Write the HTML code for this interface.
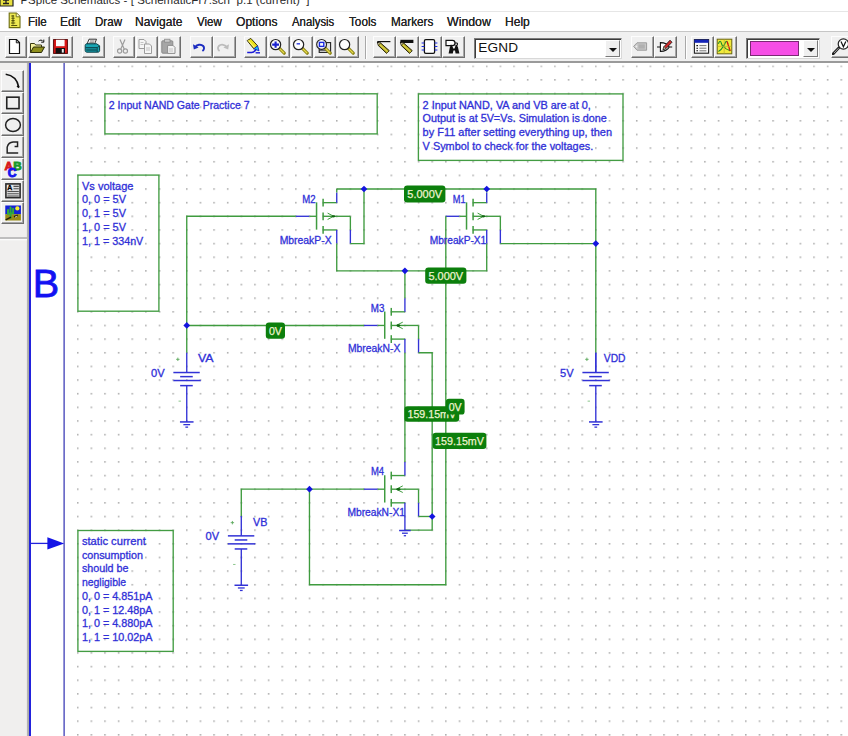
<!DOCTYPE html>
<html><head><meta charset="utf-8"><title>PSpice Schematics</title>
<style>
html,body{margin:0;padding:0;}
body{width:848px;height:736px;overflow:hidden;background:#fff;position:relative;font-family:"Liberation Sans",sans-serif;}
#cv{position:absolute;left:0;top:0;}
#title{position:absolute;left:0;top:0;width:848px;height:11.6px;background:#fff;overflow:hidden;border-bottom:1px solid #e6e6e6;box-sizing:border-box;}
#title .t{position:absolute;left:20.4px;top:-5.8px;font-size:11.5px;color:#2a2a2a;white-space:pre;letter-spacing:0.05px;}
#menu{position:absolute;left:0;top:11.6px;width:848px;height:19.4px;background:#fff;}
#menu span{position:absolute;top:3.1px;font-size:11.9px;color:#262626;white-space:pre;transform-origin:0 50%;text-shadow:0 0 0.4px #262626;}
#tbar{position:absolute;left:0;top:31px;width:848px;height:32px;background:#f0f0f0;border-top:1.2px solid #c6c6c6;box-sizing:border-box;}
#tbar:after{content:"";position:absolute;left:0;right:0;bottom:0;height:1.6px;background:#9a9a9a;}
.tb{position:absolute;top:3.8px;margin-left:-0.5px;width:22.8px;height:22px;box-sizing:border-box;background:#f0f0f0;
 border-top:1px solid #fdfdfd;border-left:1px solid #fdfdfd;border-right:1.4px solid #6e6e6e;border-bottom:1.4px solid #6e6e6e;
 box-shadow:inset -1px -1px 0 #a6a6a6;}
.tb svg{position:absolute;left:0.6px;top:1.4px;width:17px;height:17px;}
.sep{position:absolute;top:4px;width:1px;height:23px;background:#a8a8a8;box-shadow:1px 0 0 #fff;}
.combo{position:absolute;top:5.6px;height:21.5px;box-sizing:border-box;background:#fff;border:1.3px solid #7c7c7c;border-right-color:#d8d8d8;border-bottom-color:#d8d8d8;box-shadow:inset 1px 1px 0 #3c3c3c;}
.cbtn{position:absolute;top:1.8px;right:1px;bottom:1px;width:15px;background:#f0f0f0;border-left:1px solid #fff;border-top:1px solid #fff;border-right:1px solid #7a7a7a;border-bottom:1px solid #7a7a7a;box-sizing:border-box;}
.cbtn:after{content:"";position:absolute;left:3px;top:6.5px;border-left:4px solid transparent;border-right:4px solid transparent;border-top:4.4px solid #111;}
#left{position:absolute;left:0;top:63px;width:28.6px;height:673px;background:linear-gradient(to right,#f0efee 0,#f0efee 26.4px,#b4b4b4 27.4px,#a8a8a8 28.8px);}
#left .hl{position:absolute;left:0;top:173.9px;width:27px;height:1.8px;background:#bebebe;box-shadow:0 1.3px 0 #fbfbfb;}
.lb{position:absolute;left:1.4px;width:22.4px;height:22px;box-sizing:border-box;background:#f0f0f0;
 border-top:1px solid #fdfdfd;border-left:1px solid #fdfdfd;border-right:1.4px solid #6e6e6e;border-bottom:1.4px solid #6e6e6e;
 box-shadow:inset -1px -1px 0 #a6a6a6;}
.lb svg{position:absolute;left:1.2px;top:1px;width:18px;height:18px;}

</style></head><body>
<svg id="cv" width="848" height="736" viewBox="0 0 848 736" font-family="Liberation Sans, sans-serif"><defs><pattern id="g" x="76.92" y="65.4" width="13.635" height="13.645" patternUnits="userSpaceOnUse"><rect x="0" y="0" width="1.55" height="1.6" fill="#adadad"/></pattern></defs><rect x="76.92" y="65.4" width="771.08" height="670.6" fill="url(#g)"/>
<line x1="316.55" y1="202.35" x2="316.55" y2="229.64" stroke="#3f9b3f" stroke-width="1.5"/>
<line x1="323.1" y1="198.75" x2="323.1" y2="206.55" stroke="#3f9b3f" stroke-width="1.5"/>
<line x1="323.1" y1="212.39" x2="323.1" y2="220.19" stroke="#3f9b3f" stroke-width="1.5"/>
<line x1="323.1" y1="226.04" x2="323.1" y2="233.84" stroke="#3f9b3f" stroke-width="1.5"/>
<line x1="323.1" y1="202.65" x2="336.74" y2="202.65" stroke="#3f9b3f" stroke-width="1.35"/>
<line x1="323.1" y1="229.94" x2="336.74" y2="229.94" stroke="#3f9b3f" stroke-width="1.35"/>
<line x1="323.1" y1="216.29" x2="350.37" y2="216.29" stroke="#3f9b3f" stroke-width="1.35"/>
<path d="M327.6,213.09 L333.6,216.29 L327.6,219.48999999999998" fill="none" stroke="#3f9b3f" stroke-width="1.0"/>
<ellipse cx="333.5" cy="216.29" rx="1.9" ry="1.15" fill="#116311"/>
<polyline points="186.75,325.45 186.75,216.29 295.83,216.29" fill="none" stroke="#3f9b3f" stroke-width="1.35" stroke-linejoin="miter"/>
<line x1="295.83" y1="216.29" x2="309.47" y2="216.29" stroke="#3232d6" stroke-width="1.35"/>
<line x1="309.47" y1="216.29" x2="316.55" y2="216.29" stroke="#3f9b3f" stroke-width="1.35"/>
<line x1="336.74" y1="202.65" x2="336.74" y2="192.5" stroke="#3232d6" stroke-width="1.35"/>
<line x1="336.74" y1="192.5" x2="336.74" y2="189.0" stroke="#3f9b3f" stroke-width="1.35"/>
<line x1="350.37" y1="216.29" x2="350.37" y2="229.94" stroke="#3f9b3f" stroke-width="1.35"/>
<line x1="350.37" y1="229.94" x2="350.37" y2="243.58" stroke="#3232d6" stroke-width="1.35"/>
<polyline points="350.37,243.58 364.0,243.58 364.0,189.0" fill="none" stroke="#3f9b3f" stroke-width="1.35" stroke-linejoin="miter"/>
<line x1="336.74" y1="229.94" x2="336.74" y2="243.58" stroke="#3232d6" stroke-width="1.35"/>
<polyline points="336.74,243.58 336.74,270.87 486.72,270.87 486.72,243.58" fill="none" stroke="#3f9b3f" stroke-width="1.35" stroke-linejoin="miter"/>
<line x1="466.53" y1="202.35" x2="466.53" y2="229.64" stroke="#3f9b3f" stroke-width="1.5"/>
<line x1="473.08" y1="198.75" x2="473.08" y2="206.55" stroke="#3f9b3f" stroke-width="1.5"/>
<line x1="473.08" y1="212.39" x2="473.08" y2="220.19" stroke="#3f9b3f" stroke-width="1.5"/>
<line x1="473.08" y1="226.04" x2="473.08" y2="233.84" stroke="#3f9b3f" stroke-width="1.5"/>
<line x1="473.08" y1="202.65" x2="486.72" y2="202.65" stroke="#3f9b3f" stroke-width="1.35"/>
<line x1="473.08" y1="229.94" x2="486.72" y2="229.94" stroke="#3f9b3f" stroke-width="1.35"/>
<line x1="473.08" y1="216.29" x2="500.36" y2="216.29" stroke="#3f9b3f" stroke-width="1.35"/>
<path d="M477.58,213.09 L483.58,216.29 L477.58,219.48999999999998" fill="none" stroke="#3f9b3f" stroke-width="1.0"/>
<ellipse cx="483.47999999999996" cy="216.29" rx="1.9" ry="1.15" fill="#116311"/>
<line x1="445.81" y1="216.29" x2="459.45" y2="216.29" stroke="#3232d6" stroke-width="1.35"/>
<line x1="459.45" y1="216.29" x2="466.53" y2="216.29" stroke="#3f9b3f" stroke-width="1.35"/>
<line x1="486.72" y1="202.65" x2="486.72" y2="192.5" stroke="#3232d6" stroke-width="1.35"/>
<line x1="486.72" y1="192.5" x2="486.72" y2="189.0" stroke="#3f9b3f" stroke-width="1.35"/>
<line x1="500.36" y1="216.29" x2="500.36" y2="229.94" stroke="#3f9b3f" stroke-width="1.35"/>
<line x1="500.36" y1="229.94" x2="500.36" y2="243.58" stroke="#3232d6" stroke-width="1.35"/>
<line x1="500.36" y1="243.58" x2="595.8" y2="243.58" stroke="#3f9b3f" stroke-width="1.35"/>
<line x1="486.72" y1="229.94" x2="486.72" y2="243.58" stroke="#3232d6" stroke-width="1.35"/>
<polyline points="336.74,189.0 595.8,189.0 595.8,352.74" fill="none" stroke="#3f9b3f" stroke-width="1.35" stroke-linejoin="miter"/>
<line x1="595.8" y1="352.74" x2="595.8" y2="372.53" stroke="#3232d6" stroke-width="1.35"/>
<polyline points="445.81,216.29 445.81,584.7 309.47,584.7 309.47,489.19" fill="none" stroke="#3f9b3f" stroke-width="1.35" stroke-linejoin="miter"/>
<line x1="384.72" y1="311.51" x2="384.72" y2="338.8" stroke="#3f9b3f" stroke-width="1.5"/>
<line x1="391.27" y1="307.91" x2="391.27" y2="315.71" stroke="#3f9b3f" stroke-width="1.5"/>
<line x1="391.27" y1="321.55" x2="391.27" y2="329.35" stroke="#3f9b3f" stroke-width="1.5"/>
<line x1="391.27" y1="335.2" x2="391.27" y2="343.0" stroke="#3f9b3f" stroke-width="1.5"/>
<line x1="391.27" y1="311.81" x2="404.91" y2="311.81" stroke="#3f9b3f" stroke-width="1.35"/>
<line x1="391.27" y1="339.1" x2="404.91" y2="339.1" stroke="#3f9b3f" stroke-width="1.35"/>
<line x1="391.27" y1="325.45" x2="418.54" y2="325.45" stroke="#3f9b3f" stroke-width="1.35"/>
<path d="M402.77,322.15 L396.27,325.45 L402.77,328.75" fill="none" stroke="#3f9b3f" stroke-width="1.0"/>
<ellipse cx="398.47" cy="325.45" rx="1.9" ry="1.2" fill="#116311"/>
<line x1="186.75" y1="325.45" x2="364.0" y2="325.45" stroke="#3f9b3f" stroke-width="1.35"/>
<line x1="364.0" y1="325.45" x2="377.64" y2="325.45" stroke="#3232d6" stroke-width="1.35"/>
<line x1="377.64" y1="325.45" x2="384.72" y2="325.45" stroke="#3f9b3f" stroke-width="1.35"/>
<line x1="404.91" y1="311.81" x2="404.91" y2="298.16" stroke="#3232d6" stroke-width="1.35"/>
<line x1="404.91" y1="298.16" x2="404.91" y2="270.87" stroke="#3f9b3f" stroke-width="1.35"/>
<line x1="418.54" y1="325.45" x2="418.54" y2="339.1" stroke="#3f9b3f" stroke-width="1.35"/>
<line x1="418.54" y1="339.1" x2="418.54" y2="352.74" stroke="#3232d6" stroke-width="1.35"/>
<polyline points="418.54,352.74 432.18,352.74 432.18,530.12 404.91,530.12" fill="none" stroke="#3f9b3f" stroke-width="1.35" stroke-linejoin="miter"/>
<line x1="404.91" y1="339.1" x2="404.91" y2="352.74" stroke="#3232d6" stroke-width="1.35"/>
<line x1="404.91" y1="352.74" x2="404.91" y2="461.9" stroke="#3f9b3f" stroke-width="1.35"/>
<line x1="384.72" y1="475.25" x2="384.72" y2="502.53" stroke="#3f9b3f" stroke-width="1.5"/>
<line x1="391.27" y1="471.65" x2="391.27" y2="479.45" stroke="#3f9b3f" stroke-width="1.5"/>
<line x1="391.27" y1="485.29" x2="391.27" y2="493.09" stroke="#3f9b3f" stroke-width="1.5"/>
<line x1="391.27" y1="498.93" x2="391.27" y2="506.73" stroke="#3f9b3f" stroke-width="1.5"/>
<line x1="391.27" y1="475.55" x2="404.91" y2="475.55" stroke="#3f9b3f" stroke-width="1.35"/>
<line x1="391.27" y1="502.83" x2="404.91" y2="502.83" stroke="#3f9b3f" stroke-width="1.35"/>
<line x1="391.27" y1="489.19" x2="418.54" y2="489.19" stroke="#3f9b3f" stroke-width="1.35"/>
<path d="M402.77,485.89 L396.27,489.19 L402.77,492.49" fill="none" stroke="#3f9b3f" stroke-width="1.0"/>
<ellipse cx="398.47" cy="489.19" rx="1.9" ry="1.2" fill="#116311"/>
<polyline points="241.29,516.48 241.29,489.19 364.0,489.19" fill="none" stroke="#3f9b3f" stroke-width="1.35" stroke-linejoin="miter"/>
<line x1="364.0" y1="489.19" x2="377.64" y2="489.19" stroke="#3232d6" stroke-width="1.35"/>
<line x1="377.64" y1="489.19" x2="384.72" y2="489.19" stroke="#3f9b3f" stroke-width="1.35"/>
<line x1="404.91" y1="475.55" x2="404.91" y2="461.9" stroke="#3232d6" stroke-width="1.35"/>
<line x1="418.54" y1="489.19" x2="418.54" y2="502.83" stroke="#3f9b3f" stroke-width="1.35"/>
<line x1="418.54" y1="502.83" x2="418.54" y2="516.48" stroke="#3232d6" stroke-width="1.35"/>
<line x1="418.54" y1="516.48" x2="432.18" y2="516.48" stroke="#3f9b3f" stroke-width="1.35"/>
<line x1="404.91" y1="502.83" x2="404.91" y2="530.12" stroke="#3232d6" stroke-width="1.35"/>
<line x1="399.11" y1="530.52" x2="410.71000000000004" y2="530.52" stroke="#3232d6" stroke-width="1.5"/>
<line x1="402.01000000000005" y1="533.22" x2="407.81" y2="533.22" stroke="#3232d6" stroke-width="1.3"/>
<line x1="403.75" y1="535.72" x2="406.07000000000005" y2="535.72" stroke="#3232d6" stroke-width="1.3"/>
<line x1="186.75" y1="325.45" x2="186.75" y2="352.74" stroke="#3f9b3f" stroke-width="1.35"/>
<line x1="186.75" y1="352.74" x2="186.75" y2="372.53" stroke="#3232d6" stroke-width="1.35"/>
<line x1="173.35" y1="372.53" x2="199.75" y2="372.53" stroke="#3232d6" stroke-width="1.5"/>
<line x1="180.15" y1="376.63" x2="192.75" y2="376.63" stroke="#3232d6" stroke-width="1.5"/>
<line x1="173.35" y1="380.53" x2="200.75" y2="380.53" stroke="#3232d6" stroke-width="1.5"/>
<line x1="180.15" y1="385.63" x2="192.75" y2="385.63" stroke="#3232d6" stroke-width="1.5"/>
<line x1="186.75" y1="385.63" x2="186.75" y2="421.92999999999995" stroke="#3232d6" stroke-width="1.35"/>
<line x1="179.95" y1="421.92999999999995" x2="193.55" y2="421.92999999999995" stroke="#3232d6" stroke-width="1.5"/>
<line x1="183.35" y1="424.62999999999994" x2="190.15" y2="424.62999999999994" stroke="#3232d6" stroke-width="1.3"/>
<line x1="185.39" y1="427.12999999999994" x2="188.11" y2="427.12999999999994" stroke="#3232d6" stroke-width="1.3"/>
<text x="197.9" y="362.1" font-size="10.6" fill="#3030d8" stroke="#3030d8" stroke-width="0.3" textLength="15.6" lengthAdjust="spacingAndGlyphs">VA</text>
<text x="151.1" y="377.0" font-size="10.6" fill="#3030d8" stroke="#3030d8" stroke-width="0.3" textLength="13.6" lengthAdjust="spacingAndGlyphs">0V</text>
<path d="M176.15,359.33 h3.4 M177.85,357.63 v3.4" stroke="#5aa85a" stroke-width="0.9" fill="none"/>
<path d="M178.55,401.13 h2.4" stroke="#7fbf7f" stroke-width="0.9" fill="none"/>
<line x1="595.8" y1="352.74" x2="595.8" y2="372.53" stroke="#3232d6" stroke-width="1.35"/>
<line x1="582.4" y1="372.53" x2="608.8" y2="372.53" stroke="#3232d6" stroke-width="1.5"/>
<line x1="589.1999999999999" y1="376.63" x2="601.8" y2="376.63" stroke="#3232d6" stroke-width="1.5"/>
<line x1="582.4" y1="380.53" x2="609.8" y2="380.53" stroke="#3232d6" stroke-width="1.5"/>
<line x1="589.1999999999999" y1="385.63" x2="601.8" y2="385.63" stroke="#3232d6" stroke-width="1.5"/>
<line x1="595.8" y1="385.63" x2="595.8" y2="421.92999999999995" stroke="#3232d6" stroke-width="1.35"/>
<line x1="589.0" y1="421.92999999999995" x2="602.5999999999999" y2="421.92999999999995" stroke="#3232d6" stroke-width="1.5"/>
<line x1="592.4" y1="424.62999999999994" x2="599.1999999999999" y2="424.62999999999994" stroke="#3232d6" stroke-width="1.3"/>
<line x1="594.4399999999999" y1="427.12999999999994" x2="597.16" y2="427.12999999999994" stroke="#3232d6" stroke-width="1.3"/>
<text x="603.8" y="362.1" font-size="10.6" fill="#3030d8" stroke="#3030d8" stroke-width="0.3" textLength="21.7" lengthAdjust="spacingAndGlyphs">VDD</text>
<text x="560.1" y="377.0" font-size="10.6" fill="#3030d8" stroke="#3030d8" stroke-width="0.3" textLength="13.6" lengthAdjust="spacingAndGlyphs">5V</text>
<path d="M585.1999999999999,359.33 h3.4 M586.9,357.63 v3.4" stroke="#5aa85a" stroke-width="0.9" fill="none"/>
<path d="M587.5999999999999,401.13 h2.4" stroke="#7fbf7f" stroke-width="0.9" fill="none"/>
<line x1="241.29" y1="516.07" x2="241.29" y2="535.86" stroke="#3232d6" stroke-width="1.35"/>
<line x1="227.89" y1="535.86" x2="254.29" y2="535.86" stroke="#3232d6" stroke-width="1.5"/>
<line x1="234.69" y1="539.96" x2="247.29" y2="539.96" stroke="#3232d6" stroke-width="1.5"/>
<line x1="227.89" y1="543.86" x2="255.29" y2="543.86" stroke="#3232d6" stroke-width="1.5"/>
<line x1="234.69" y1="548.96" x2="247.29" y2="548.96" stroke="#3232d6" stroke-width="1.5"/>
<line x1="241.29" y1="548.96" x2="241.29" y2="585.26" stroke="#3232d6" stroke-width="1.35"/>
<line x1="234.48999999999998" y1="585.26" x2="248.09" y2="585.26" stroke="#3232d6" stroke-width="1.5"/>
<line x1="237.89" y1="587.96" x2="244.69" y2="587.96" stroke="#3232d6" stroke-width="1.3"/>
<line x1="239.92999999999998" y1="590.46" x2="242.65" y2="590.46" stroke="#3232d6" stroke-width="1.3"/>
<text x="253.0" y="525.5" font-size="10.6" fill="#3030d8" stroke="#3030d8" stroke-width="0.3" textLength="14.4" lengthAdjust="spacingAndGlyphs">VB</text>
<text x="205.6" y="540.4" font-size="10.6" fill="#3030d8" stroke="#3030d8" stroke-width="0.3" textLength="13.6" lengthAdjust="spacingAndGlyphs">0V</text>
<path d="M230.69,522.66 h3.4 M232.39,520.96 v3.4" stroke="#5aa85a" stroke-width="0.9" fill="none"/>
<path d="M233.09,564.46 h2.4" stroke="#7fbf7f" stroke-width="0.9" fill="none"/>
<polygon points="360.65,189.0 364.0,185.65 367.35,189.0 364.0,192.35" fill="#1414e0"/>
<polygon points="483.37,189.0 486.72,185.65 490.07000000000005,189.0 486.72,192.35" fill="#1414e0"/>
<polygon points="592.4499999999999,243.58 595.8,240.23000000000002 599.15,243.58 595.8,246.93" fill="#1414e0"/>
<polygon points="401.56,270.87 404.91,267.52 408.26000000000005,270.87 404.91,274.22" fill="#1414e0"/>
<polygon points="183.4,325.45 186.75,322.09999999999997 190.1,325.45 186.75,328.8" fill="#1414e0"/>
<polygon points="306.12,489.19 309.47,485.84 312.82000000000005,489.19 309.47,492.54" fill="#1414e0"/>
<polygon points="428.83,516.48 432.18,513.13 435.53000000000003,516.48 432.18,519.83" fill="#1414e0"/>
<text x="302.2" y="203.1" font-size="10.5" fill="#3030d8" stroke="#3030d8" stroke-width="0.3"  textLength="13.3" lengthAdjust="spacingAndGlyphs">M2</text>
<text x="279.7" y="243.5" font-size="10.5" fill="#3030d8" stroke="#3030d8" stroke-width="0.3"  textLength="51.9" lengthAdjust="spacingAndGlyphs">MbreakP-X</text>
<text x="452.8" y="203.1" font-size="10.5" fill="#3030d8" stroke="#3030d8" stroke-width="0.3"  textLength="12.8" lengthAdjust="spacingAndGlyphs">M1</text>
<text x="429.7" y="243.5" font-size="10.5" fill="#3030d8" stroke="#3030d8" stroke-width="0.3"  textLength="56.6" lengthAdjust="spacingAndGlyphs">MbreakP-X1</text>
<text x="370.8" y="312.2" font-size="10.5" fill="#3030d8" stroke="#3030d8" stroke-width="0.3"  textLength="13.6" lengthAdjust="spacingAndGlyphs">M3</text>
<text x="348.0" y="352.2" font-size="10.5" fill="#3030d8" stroke="#3030d8" stroke-width="0.3"  textLength="52.3" lengthAdjust="spacingAndGlyphs">MbreakN-X</text>
<text x="370.9" y="475.3" font-size="10.5" fill="#3030d8" stroke="#3030d8" stroke-width="0.3"  textLength="13.2" lengthAdjust="spacingAndGlyphs">M4</text>
<text x="347.4" y="516.3" font-size="10.5" fill="#3030d8" stroke="#3030d8" stroke-width="0.3"  textLength="57.6" lengthAdjust="spacingAndGlyphs">MbreakN-X1</text>
<rect x="404.0" y="185.4" width="41.4" height="17.0" rx="3.2" ry="3.2" fill="#0c7f0c"/>
<text x="424.7" y="197.97" font-size="11.3" fill="#eef3cf" stroke="#eef3cf" stroke-width="0.25" text-anchor="middle" textLength="34.8" lengthAdjust="spacingAndGlyphs">5.000V</text>
<rect x="425.2" y="267.6" width="41.2" height="16.2" rx="3.2" ry="3.2" fill="#0c7f0c"/>
<text x="445.8" y="279.77" font-size="11.3" fill="#eef3cf" stroke="#eef3cf" stroke-width="0.25" text-anchor="middle" textLength="34.8" lengthAdjust="spacingAndGlyphs">5.000V</text>
<rect x="265.8" y="322.6" width="19.2" height="16.2" rx="3.2" ry="3.2" fill="#0c7f0c"/>
<text x="275.4" y="334.77" font-size="11.3" fill="#eef3cf" stroke="#eef3cf" stroke-width="0.25" text-anchor="middle" textLength="13.0" lengthAdjust="spacingAndGlyphs">0V</text>
<rect x="404.4" y="406.2" width="54.8" height="15.6" rx="3.2" ry="3.2" fill="#0c7f0c"/>
<text x="431.8" y="418.07" font-size="11.3" fill="#eef3cf" stroke="#eef3cf" stroke-width="0.25" text-anchor="middle" textLength="48.6" lengthAdjust="spacingAndGlyphs">159.15mV</text>
<rect x="445.8" y="398.8" width="18.8" height="15.8" rx="3.2" ry="3.2" fill="#0c7f0c"/>
<text x="455.2" y="410.77" font-size="11.3" fill="#eef3cf" stroke="#eef3cf" stroke-width="0.25" text-anchor="middle" textLength="13.0" lengthAdjust="spacingAndGlyphs">0V</text>
<rect x="432.6" y="432.8" width="53.8" height="16.2" rx="3.2" ry="3.2" fill="#0c7f0c"/>
<text x="459.5" y="444.97" font-size="11.3" fill="#eef3cf" stroke="#eef3cf" stroke-width="0.25" text-anchor="middle" textLength="48.9" lengthAdjust="spacingAndGlyphs">159.15mV</text>
<rect x="104.9" y="93.8" width="272.3" height="40.1" fill="none" stroke="#439c43" stroke-width="1.35"/>
<rect x="418.4" y="93.9" width="204.6" height="66.5" fill="none" stroke="#439c43" stroke-width="1.35"/>
<rect x="77.9" y="175.1" width="81.0" height="136.1" fill="none" stroke="#439c43" stroke-width="1.35"/>
<rect x="77.9" y="530.5" width="95.3" height="120.9" fill="none" stroke="#439c43" stroke-width="1.35"/>
<text x="108.8" y="108.6" font-size="11" fill="#3030d8" stroke="#3030d8" stroke-width="0.3"  textLength="140.8" lengthAdjust="spacingAndGlyphs">2 Input NAND Gate Practice 7</text>
<text x="422.6" y="109.0" font-size="11" fill="#3030d8" stroke="#3030d8" stroke-width="0.3"  textLength="168.2" lengthAdjust="spacingAndGlyphs">2 Input NAND, VA and VB are at 0,</text>
<text x="422.6" y="122.1" font-size="11" fill="#3030d8" stroke="#3030d8" stroke-width="0.3"  textLength="184.2" lengthAdjust="spacingAndGlyphs">Output is at 5V=Vs. Simulation is done</text>
<text x="422.6" y="135.8" font-size="11" fill="#3030d8" stroke="#3030d8" stroke-width="0.3"  textLength="189.4" lengthAdjust="spacingAndGlyphs">by F11 after setting everything up, then</text>
<text x="422.6" y="149.5" font-size="11" fill="#3030d8" stroke="#3030d8" stroke-width="0.3"  textLength="170.6" lengthAdjust="spacingAndGlyphs">V Symbol to check for the voltages.</text>
<text x="82.0" y="189.7" font-size="11" fill="#3030d8" stroke="#3030d8" stroke-width="0.3"  textLength="51.5" lengthAdjust="spacingAndGlyphs">Vs voltage</text>
<text x="82.0" y="203.4" font-size="11" fill="#3030d8" stroke="#3030d8" stroke-width="0.3"  textLength="43.9" lengthAdjust="spacingAndGlyphs">0, 0 = 5V</text>
<text x="82.0" y="217.1" font-size="11" fill="#3030d8" stroke="#3030d8" stroke-width="0.3"  textLength="43.9" lengthAdjust="spacingAndGlyphs">0, 1 = 5V</text>
<text x="82.0" y="230.8" font-size="11" fill="#3030d8" stroke="#3030d8" stroke-width="0.3"  textLength="43.9" lengthAdjust="spacingAndGlyphs">1, 0 = 5V</text>
<text x="82.0" y="244.5" font-size="11" fill="#3030d8" stroke="#3030d8" stroke-width="0.3"  textLength="61.3" lengthAdjust="spacingAndGlyphs">1, 1 = 334nV</text>
<text x="81.9" y="545.0" font-size="11" fill="#3030d8" stroke="#3030d8" stroke-width="0.3"  textLength="64.0" lengthAdjust="spacingAndGlyphs">static current</text>
<text x="81.9" y="558.7" font-size="11" fill="#3030d8" stroke="#3030d8" stroke-width="0.3"  textLength="61.0" lengthAdjust="spacingAndGlyphs">consumption</text>
<text x="81.9" y="572.4" font-size="11" fill="#3030d8" stroke="#3030d8" stroke-width="0.3"  textLength="46.6" lengthAdjust="spacingAndGlyphs">should be</text>
<text x="81.9" y="586.1" font-size="11" fill="#3030d8" stroke="#3030d8" stroke-width="0.3"  textLength="44.2" lengthAdjust="spacingAndGlyphs">negligible</text>
<text x="81.9" y="599.8" font-size="11" fill="#3030d8" stroke="#3030d8" stroke-width="0.3"  textLength="70.6" lengthAdjust="spacingAndGlyphs">0, 0 = 4.851pA</text>
<text x="81.9" y="613.5" font-size="11" fill="#3030d8" stroke="#3030d8" stroke-width="0.3"  textLength="70.6" lengthAdjust="spacingAndGlyphs">0, 1 = 12.48pA</text>
<text x="81.9" y="627.2" font-size="11" fill="#3030d8" stroke="#3030d8" stroke-width="0.3"  textLength="70.6" lengthAdjust="spacingAndGlyphs">1, 0 = 4.880pA</text>
<text x="81.9" y="640.9" font-size="11" fill="#3030d8" stroke="#3030d8" stroke-width="0.3"  textLength="70.6" lengthAdjust="spacingAndGlyphs">1, 1 = 10.02pA</text>
<rect x="28.8" y="63" width="2.2" height="673" fill="#2222dd"/>
<rect x="63.3" y="63" width="1.7" height="673" fill="#6c6cc8"/>
<text x="32.7" y="296.5" font-size="39.6" fill="#1212f2" stroke="#1212f2" stroke-width="0.8">B</text>
<line x1="30" y1="543.4" x2="50" y2="543.4" stroke="#2222dd" stroke-width="1.3"/>
<polygon points="47.4,537.2 64.2,543.4 47.4,549.6" fill="#1414e6"/></svg>
<div id="title">
<svg style="position:absolute;left:-1px;top:-9px" width="16" height="16" viewBox="0 0 16 16"><path d="M1 0h9l4 4v11H1z" fill="#e8e040" stroke="#222" stroke-width="1.2"/><path d="M4 9h6M7 6v7M4 12.5h6" stroke="#222" stroke-width="1.3" fill="none"/></svg>
<div class="t">PSpice Schematics - [ SchematicFr7.sch  p.1 (current)  ]</div></div>
<div id="menu">
<svg style="position:absolute;left:7px;top:0.4px" width="15" height="17" viewBox="0 0 15 17"><path d="M2.2 1h7.2l3.6 3.6V15.6H2.2z" fill="#eeea52" stroke="#6b6b10" stroke-width="1.1"/><path d="M9.2 1v3.8h3.8" fill="#fffbd0" stroke="#6b6b10" stroke-width="0.9"/><path d="M4.2 4h3M6 3v9.4M4.4 6.3h3.2M4.4 8.6h3.2M4 11h4.2M4.2 13.4h6" stroke="#55550c" stroke-width="1.05" fill="none"/></svg>
<span style="left:28.0px;transform:scaleX(0.976)">File</span><span style="left:60.2px;transform:scaleX(1.005)">Edit</span><span style="left:94.6px;transform:scaleX(0.973)">Draw</span><span style="left:135.3px;transform:scaleX(1.010)">Navigate</span><span style="left:196.8px;transform:scaleX(0.971)">View</span><span style="left:236.0px;transform:scaleX(1.015)">Options</span><span style="left:292.1px;transform:scaleX(0.955)">Analysis</span><span style="left:349.4px;transform:scaleX(0.987)">Tools</span><span style="left:390.9px;transform:scaleX(0.985)">Markers</span><span style="left:447.2px;transform:scaleX(1.038)">Window</span><span style="left:504.9px;transform:scaleX(1.014)">Help</span>
</div>
<div id="tbar">
<div class="tb" style="left:5.2px;"><svg viewBox="0 0 17 17"><path d="M3.5 1.5h7l3 3v11h-10z" fill="#fff" stroke="#111" stroke-width="1.2"/><path d="M10.3 1.6v3.2h3.1" fill="none" stroke="#111" stroke-width="1"/></svg></div>
<div class="tb" style="left:28.2px;"><svg viewBox="0 0 17 17"><path d="M1.5 14.5V5.5h4l1.2 1.5h5.8v2" fill="#f4f0a0" stroke="#3a3a10" stroke-width="1"/><path d="M1.5 14.5l3-5.5h11l-3 5.5z" fill="#8f8f1c" stroke="#2a2a08" stroke-width="1"/><path d="M9.5 3.2c1.6-1.6 3.6-1.4 4.6.2" fill="none" stroke="#111" stroke-width="1"/><path d="M14.8 1.6v2.6h-2.6" fill="none" stroke="#111" stroke-width="1"/></svg></div>
<div class="tb" style="left:51.2px;"><svg viewBox="0 0 17 17"><rect x="1.6" y="1.6" width="13.8" height="13.8" fill="#d81616" stroke="#5a0808" stroke-width="1"/><rect x="4" y="1.8" width="8.6" height="6.4" fill="#fafafa"/><rect x="3.6" y="10" width="9.4" height="5.4" fill="#111"/><rect x="9.8" y="11" width="2" height="3.6" fill="#e8e8e8"/></svg></div>
<div class="tb" style="left:82.6px;"><svg viewBox="0 0 17 17"><path d="M5 1.2h7.5l-2 5h-7.5z" fill="#f2f2f2" stroke="#222" stroke-width="0.9"/><path d="M6 3h4.5M5.4 4.6h4.5" stroke="#666" stroke-width="0.8"/><path d="M1.2 7.4c0-1 .8-1.6 1.8-1.6h9.6l3 2v4.8c0 1-.8 1.6-1.8 1.6H3c-1 0-1.8-.6-1.8-1.6z" fill="#18a6b4" stroke="#0a3c44" stroke-width="1"/><path d="M1.6 9.6h11.6l2-1.4" stroke="#0a3c44" stroke-width="0.9" fill="none"/><rect x="2.2" y="10.6" width="10.6" height="2.6" fill="#0e6a74"/><path d="M13.2 9.6v4.4" stroke="#0a3c44" stroke-width="0.9"/></svg></div>
<div class="tb" style="left:113.2px;"><svg viewBox="0 0 17 17"><path d="M6 1.5l4.2 9.4M11 1.5L6.8 10.9" stroke="#9c9c9c" stroke-width="1.2" fill="none"/><circle cx="5.6" cy="13" r="2.1" fill="none" stroke="#9c9c9c" stroke-width="1.2"/><circle cx="11.4" cy="13" r="2.1" fill="none" stroke="#9c9c9c" stroke-width="1.2"/></svg></div>
<div class="tb" style="left:136.2px;"><svg viewBox="0 0 17 17"><path d="M2 1.5h5l2 2v7H2z" fill="#f6f6f6" stroke="#9c9c9c" stroke-width="1"/><path d="M7.5 6h5l2 2v7.5h-7z" fill="#f6f6f6" stroke="#9c9c9c" stroke-width="1"/><path d="M3.5 4.5h3M3.5 6.5h3M9 10h4M9 12h4" stroke="#bdbdbd" stroke-width="0.9"/></svg></div>
<div class="tb" style="left:159.2px;"><svg viewBox="0 0 17 17"><rect x="1.8" y="2.8" width="11" height="12.4" rx="1" fill="#a6a6a6" stroke="#8a8a8a" stroke-width="1"/><rect x="4.6" y="1.2" width="5.4" height="3" fill="#c9c9c9" stroke="#8a8a8a" stroke-width="0.8"/><path d="M7.6 7.4h5.4l2 2v6H7.6z" fill="#f2f2f2" stroke="#8e8e8e" stroke-width="1"/><path d="M9 11h4M9 13h4" stroke="#bdbdbd" stroke-width="0.9"/></svg></div>
<div class="tb" style="left:190.4px;"><svg viewBox="0 0 17 17"><path d="M4 9.6C5.6 6.4 10 5.8 12.2 8c1.4 1.6 1 3.8-.8 5" fill="none" stroke="#1c2cc0" stroke-width="1.9"/><path d="M2 6.2l.8 5.4 4.8-2z" fill="#1c2cc0"/></svg></div>
<div class="tb" style="left:213.4px;"><svg viewBox="0 0 17 17"><path d="M13 9.6C11.4 6.4 7 5.8 4.8 8c-1.4 1.6-1 3.8.8 5" fill="none" stroke="#bcbcbc" stroke-width="1.8"/><path d="M15 6.2l-.8 5.4-4.8-2z" fill="#bcbcbc"/></svg></div>
<div class="tb" style="left:244.6px;"><svg viewBox="0 0 17 17"><path d="M1.2 2.6l3.6-2.2 6.8 7.4-3.8 3z" fill="#ece21e" stroke="#3a3608" stroke-width="1"/><path d="M2.2 2.4l6.6 7.4" stroke="#fff9a0" stroke-width="0.9"/><path d="M7.8 10.8l3.8-3 1.4 5z" fill="#16c8e8" stroke="#1420c8" stroke-width="0.9"/><path d="M1.2 14.6h4.4c2.4 0 3.2-1.6 4.6-3.4" fill="none" stroke="#1a1ad8" stroke-width="1.5"/><path d="M9.6 14.8h4.4" stroke="#1a1ad8" stroke-width="1.4"/></svg></div>
<div class="tb" style="left:268px;"><svg viewBox="0 0 17 17"><path d="M10.2 10.2l5 5" stroke="#8c8416" stroke-width="3.2" stroke-linecap="round"/><path d="M10.6 10.6l4.2 4.2" stroke="#e6da4a" stroke-width="1.3" stroke-linecap="round"/><circle cx="6.6" cy="6.6" r="5.1" fill="#fdfdfd" stroke="#222" stroke-width="1.2"/><path d="M3.2 6.6h6.8M6.6 3.4v6.4" stroke="#1a22d0" stroke-width="2.1"/></svg></div>
<div class="tb" style="left:291px;"><svg viewBox="0 0 17 17"><path d="M10.2 10.2l5 5" stroke="#8c8416" stroke-width="3.2" stroke-linecap="round"/><path d="M10.6 10.6l4.2 4.2" stroke="#e6da4a" stroke-width="1.3" stroke-linecap="round"/><circle cx="6.6" cy="6.6" r="5.1" fill="#fdfdfd" stroke="#222" stroke-width="1.2"/><path d="M4.6 5.8h3.4" stroke="#3a48e0" stroke-width="1.5"/></svg></div>
<div class="tb" style="left:314px;"><svg viewBox="0 0 17 17"><rect x="4.2" y="4.6" width="11.4" height="9.8" fill="#e4e4e4" stroke="#222" stroke-width="1.1"/><path d="M4.2 12.2h9" stroke="#222" stroke-width="0.9"/><path d="M10.4 10.4l4.8 4.8" stroke="#8c8416" stroke-width="3.2" stroke-linecap="round"/><path d="M10.8 10.8l4 4" stroke="#e6da4a" stroke-width="1.3" stroke-linecap="round"/><circle cx="6.6" cy="6.4" r="4.9" fill="#fdfdfd" stroke="#222" stroke-width="1.2"/><rect x="4.4" y="4.4" width="4.4" height="4" fill="none" stroke="#1a2ae0" stroke-width="1.4"/></svg></div>
<div class="tb" style="left:337px;"><svg viewBox="0 0 17 17"><path d="M10.2 10.2l5 5" stroke="#8c8416" stroke-width="3.2" stroke-linecap="round"/><path d="M10.6 10.6l4.2 4.2" stroke="#e6da4a" stroke-width="1.3" stroke-linecap="round"/><circle cx="6.6" cy="6.6" r="5.1" fill="#fdfdfd" stroke="#222" stroke-width="1.2"/></svg></div>
<div class="tb" style="left:373.9px;"><svg viewBox="0 0 17 17"><path d="M2.4 3.6h13" stroke="#111" stroke-width="1.2"/><path d="M5.6 5l8.6 7.6-2.6 2.8-8.4-8z" fill="#b4aa24" stroke="#26220a" stroke-width="1"/><path d="M2.4 4.2l3.2.8-2.4 2.4z" fill="#e8dcb0" stroke="#26220a" stroke-width="0.8"/><path d="M4.6 6.4l8.2 7.6" stroke="#f0e860" stroke-width="0.9"/><path d="M2.3 4.1l1 .9" stroke="#111" stroke-width="1.3"/></svg></div>
<div class="tb" style="left:396.6px;"><svg viewBox="0 0 17 17"><path d="M2.4 3.4h13" stroke="#111" stroke-width="3.2"/><path d="M5.6 5l8.6 7.6-2.6 2.8-8.4-8z" fill="#b4aa24" stroke="#26220a" stroke-width="1"/><path d="M2.4 4.2l3.2.8-2.4 2.4z" fill="#e8dcb0" stroke="#26220a" stroke-width="0.8"/><path d="M4.6 6.4l8.2 7.6" stroke="#f0e860" stroke-width="0.9"/><path d="M2.3 4.1l1 .9" stroke="#111" stroke-width="1.3"/></svg></div>
<div class="tb" style="left:419.6px;"><svg viewBox="0 0 17 17"><rect x="3.4" y="1.6" width="10.2" height="13.8" rx="1.4" fill="#fff" stroke="#111" stroke-width="1.3"/><path d="M0.6 5h2.8M0.6 8.5h2.8M0.6 12h2.8M13.6 5h2.8M13.6 8.5h2.8M13.6 12h2.8" stroke="#1a2ae0" stroke-width="1.2"/></svg></div>
<div class="tb" style="left:442.5px;"><svg viewBox="0 0 17 17"><path d="M2 2.4h6.4c1.6 0 2.6 1.2 2.6 2.6s-1 2.6-2.6 2.6H2z" fill="#fff" stroke="#111" stroke-width="1.2"/><path d="M11 5h2.4v2.4" stroke="#111" stroke-width="1" fill="none"/><path d="M6 8.6h2.6l.6 2h1.4l.6-2h2.6l1.6 7h-3.8l-.6-3h-1.6l-.6 3H4.6z" fill="#111"/><rect x="6.4" y="6.8" width="1.8" height="2.2" fill="#111"/><rect x="11.4" y="6.8" width="1.8" height="2.2" fill="#111"/></svg></div>
<div class="tb" style="left:631.4px;"><svg viewBox="0 0 17 17"><path d="M1.6 8.4l3.4-3.6h9.6v7.4H5z" fill="#c8c8c8" stroke="#9c9c9c" stroke-width="1"/><rect x="6.4" y="6.4" width="6.4" height="4.2" fill="#b0b0b0"/><circle cx="4.4" cy="8.5" r="0.9" fill="#f0f0f0"/></svg></div>
<div class="tb" style="left:654.6px;"><svg viewBox="0 0 17 17"><path d="M1 9h3.4M4.4 4.6v8.8c4.4 0 7.4-1.6 8.8-4.4C11.8 6.2 8.8 4.6 4.4 4.6zM13.2 9h3" fill="#fff" stroke="#111" stroke-width="1.1"/><path d="M7 11.6l1-3 6-6.4 2 2-6 6.4z" fill="#d02a2a" stroke="#111" stroke-width="0.8"/><path d="M7 11.6l1-3 2 2z" fill="#f4e8c0" stroke="#111" stroke-width="0.6"/></svg></div>
<div class="tb" style="left:691.6px;"><svg viewBox="0 0 17 17"><rect x="1.4" y="1.6" width="14.2" height="13.6" fill="#fafafa" stroke="#222" stroke-width="1.1"/><rect x="1.4" y="1.6" width="14.2" height="3.2" fill="#1424b8"/><path d="M3.4 7.6h1.6M3.4 10.2h1.6M3.4 12.8h1.6" stroke="#111" stroke-width="1.1"/><path d="M6.4 7.6h7M6.4 10.2h7M6.4 12.8h7" stroke="#777" stroke-width="1"/></svg></div>
<div class="tb" style="left:714.8px;"><svg viewBox="0 0 17 17"><rect x="1.2" y="1.2" width="14.6" height="14.6" fill="#f2ea3c" stroke="#6a6410" stroke-width="1"/><path d="M2.4 5.8c1.2-3.4 2.2-3.4 3.2 0s2 3.4 3.2 0 2-3.4 3.2 0" fill="none" stroke="#1a8a2a" stroke-width="1.2"/><path d="M2.4 13.6c2-1 3.6-3 5-5.4 1.4 2 3 3.6 6.8 4.4" fill="none" stroke="#1a8a2a" stroke-width="1.1"/><path d="M11 3.4l3.2 9.6" stroke="#d01818" stroke-width="1.3"/><path d="M8.2 1.6v14M1.6 8.4h14" stroke="#b8b030" stroke-width="0.7"/></svg></div>
<div class="tb" style="left:831px;"><svg viewBox="0 0 17 17"><path d="M1 16l6-6.4" stroke="#222" stroke-width="2.6" stroke-linecap="round"/><path d="M2 15l4.6-4.8" stroke="#bbb" stroke-width="0.8"/><circle cx="11.4" cy="6" r="5.2" fill="#fff" stroke="#222" stroke-width="1.2"/><path d="M9 3.4l2.4 5.4 2.4-5.4" fill="none" stroke="#111" stroke-width="1.2"/></svg></div>
<div class="sep" style="left:365.2px"></div>
<div class="sep" style="left:684.6px"></div>
<div class="combo" style="left:473.6px;width:148.4px"><span style="position:absolute;left:3.6px;top:1.6px;font-size:13.6px;color:#111;letter-spacing:0.2px">EGND</span><div class="cbtn"></div></div>
<div class="combo" style="left:745.6px;width:74.6px"><div style="position:absolute;left:3.2px;top:2.4px;width:49.4px;height:15px;background:#f64ee6;border:1px solid #7a2a74;box-sizing:border-box"></div><div class="cbtn"></div></div>
</div>
<div id="left"><div class="hl"></div>
<div class="lb" style="top:6.8px"><svg viewBox="0 0 17 17"><path d="M1.6 2.2c7 1 11 5 12.4 12.2" fill="none" stroke="#111" stroke-width="1.4"/><path d="M12.4 13.2l1.8 1.6" stroke="#111" stroke-width="1.6"/></svg></div>
<div class="lb" style="top:28.8px"><svg viewBox="0 0 17 17"><rect x="2.6" y="3" width="11.6" height="10.8" fill="none" stroke="#222" stroke-width="1.5"/></svg></div>
<div class="lb" style="top:50.8px"><svg viewBox="0 0 17 17"><ellipse cx="8.5" cy="8.5" rx="7" ry="6.2" fill="none" stroke="#222" stroke-width="1.4"/></svg></div>
<div class="lb" style="top:72.8px"><svg viewBox="0 0 17 17"><path d="M13.4 14.2H3V8.6c.8-3 2.8-4.6 5.6-4.8h4.2v4.2h-2.8" fill="none" stroke="#222" stroke-width="1.4"/></svg></div>
<div class="lb" style="top:94.8px"><svg viewBox="0 0 17 17"><text x="0.4" y="9.6" font-size="11" font-weight="bold" font-family="Liberation Sans, sans-serif" fill="#d81818" stroke="#d81818" stroke-width="0.8">A</text><text x="8.8" y="9.8" font-size="11" font-weight="bold" font-family="Liberation Sans, sans-serif" fill="#18982a" stroke="#18982a" stroke-width="0.8">B</text><text x="3.6" y="16.2" font-size="11.4" font-weight="bold" font-family="Liberation Sans, sans-serif" fill="#1414ee" stroke="#1414ee" stroke-width="0.9">C</text></svg></div>
<div class="lb" style="top:116.8px"><svg viewBox="0 0 17 17"><rect x="1.8" y="1.8" width="13.4" height="13" fill="#dcdcdc" stroke="#2a2a2a" stroke-width="1.5"/><rect x="3" y="3" width="5" height="4.8" fill="#f2f2f2"/><text x="3.1" y="7.7" font-size="6.6" font-weight="bold" font-family="Liberation Sans, sans-serif" fill="#000" stroke="#000" stroke-width="0.3">A</text><path d="M9 4.2h5M9 6.4h5M3.2 9h10.8M3.2 11.1h10.8M3.2 13.2h10.8" stroke="#505050" stroke-width="1.1"/></svg></div>
<div class="lb" style="top:138.8px"><svg viewBox="0 0 17 17"><rect x="1.2" y="1.4" width="14.8" height="8.4" fill="#1420d8"/><rect x="1.2" y="9.6" width="14.8" height="6" fill="#9a8c18"/><circle cx="12.6" cy="4.2" r="2" fill="#f6ee30"/><path d="M6.2 13V3.4M3.8 5.6v3.6h2.4M8.6 4.6v4.2H6.2" fill="none" stroke="#2faa3a" stroke-width="1.9" stroke-linecap="round"/><path d="M1.6 15l5-2.6M9.4 12l3.6-1.4" stroke="#221c08" stroke-width="1.4"/><path d="M10.4 12.4l2-1" stroke="#ddd" stroke-width="0.8"/></svg></div>
</div>

</body></html>
